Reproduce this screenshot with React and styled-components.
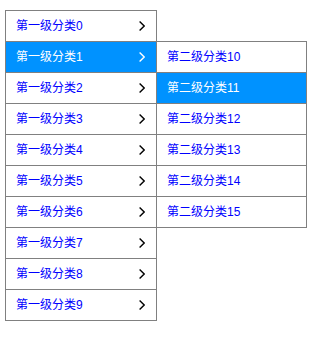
import React from 'react';
import styled, { createGlobalStyle } from 'styled-components';

const GlobalStyle = createGlobalStyle`
      body {
            margin: 0;
            background: #ffffff;
            font-family: "Liberation Sans", "Noto Sans CJK SC", sans-serif;
      }
`

const Page = styled.div`
      padding: 10px 0 0 5px;
`

const Menu = styled.ul`
      position: relative;
      width: ${(p) => p.$width}px;
      margin: 0;
      padding: 0;
      list-style: none;
      border: 1px solid #808080;
      background-color: white;
`

const SubMenu = styled(Menu)`
      position: absolute;
      top: -1px;
      left: 100%;
      z-index: 2;
`

const Item = styled.li`
      position: relative;
      height: 30px;
      display: flex;
      align-items: center;
      justify-content: space-between;
      padding: 0 11px 0 10px;
      border-top: 1px solid #808080;
      background-color: ${(p) => (p.$active ? '#0092ff' : 'transparent')};
      color: ${(p) => (p.$active ? '#ffffff' : '#0000ff')};
      font-size: 12px;
      cursor: pointer;
      &:first-child {
            border-top: none;
      }
`

const Label = styled.span`
      line-height: 30px;
      white-space: nowrap;
`

const Arrow = ({ color }) => (
      <svg width="6" height="10" viewBox="0 0 6 10">
            <polyline points="0.6,0.6 5.2,5 0.6,9.4" fill="none" stroke={color} strokeWidth="1.4" />
      </svg>
)

const firstLevel = Array.from({ length: 10 }, (_, i) => `第一级分类${i}`);
const secondLevel = Array.from({ length: 6 }, (_, i) => `第二级分类${10 + i}`);

const App = () => {
      const activeFirst = 1;
      const activeSecond = 1;

      return (
            <Page>
                  <GlobalStyle />
                  <Menu $width={150}>
                        {firstLevel.map((name, i) => (
                              <Item key={name} $active={i === activeFirst}>
                                    <Label>{name}</Label>
                                    <Arrow color={i === activeFirst ? '#ffffff' : '#000000'} />
                                    {i === activeFirst && (
                                          <SubMenu $width={149}>
                                                {secondLevel.map((sub, j) => (
                                                      <Item key={sub} $active={j === activeSecond}>
                                                            <Label>{sub}</Label>
                                                      </Item>
                                                ))}
                                          </SubMenu>
                                    )}
                              </Item>
                        ))}
                  </Menu>
            </Page>
      );
}

export default App;
